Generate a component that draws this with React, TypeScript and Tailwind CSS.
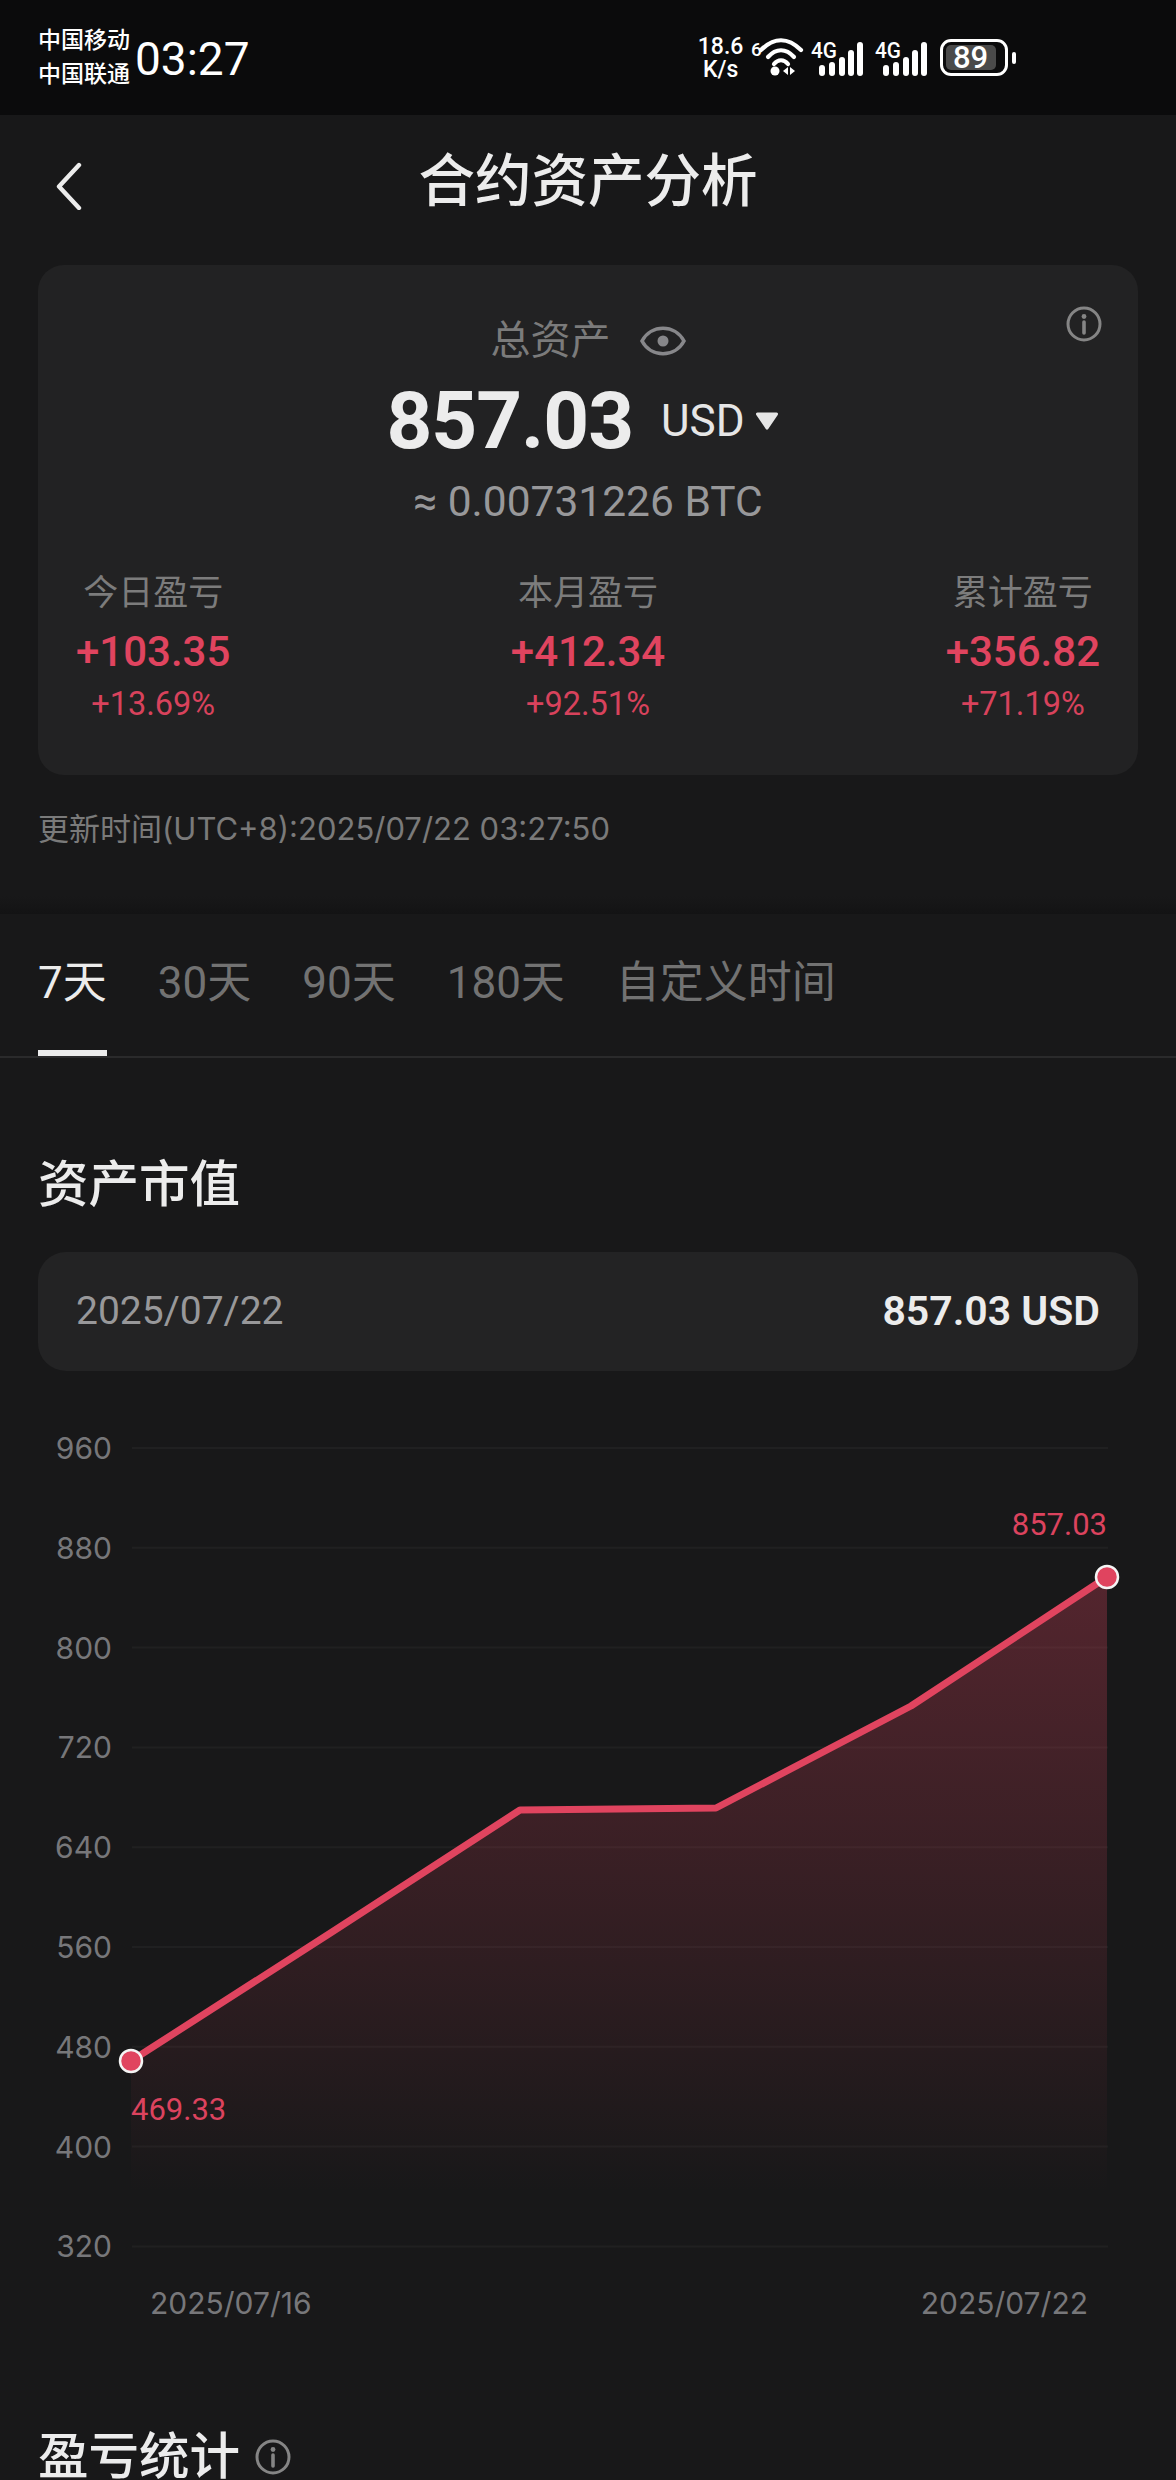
import React from 'react';

const sans = '[font-family:Roboto,"Noto_Sans_CJK_SC",sans-serif]';

const Signal: React.FC = () => (
  <svg width="54" height="40" viewBox="0 0 54 40" fill="white">
    <text x="0" y="20" fontSize="22" fontWeight="500" textLength="26" lengthAdjust="spacingAndGlyphs" fontFamily="Roboto, sans-serif">
      4G
    </text>
    <rect x="8" y="27" width="6" height="11" rx="3" />
    <rect x="18" y="24" width="6" height="14" rx="3" />
    <rect x="28" y="19" width="6" height="19" rx="3" />
    <rect x="37" y="12" width="6" height="26" rx="3" />
    <rect x="46" y="4" width="6" height="34" rx="3" />
  </svg>
);

const InfoIcon: React.FC<{ size: number; color: string }> = ({ size, color }) => (
  <svg width={size} height={size} viewBox="0 0 36 36" fill="none">
    <circle cx="18" cy="18" r="16" stroke={color} strokeWidth="3" />
    <circle cx="18" cy="10.5" r="2.4" fill={color} />
    <path d="M18 16v11" stroke={color} strokeWidth="3.6" strokeLinecap="round" />
  </svg>
);

const StatusBar: React.FC = () => (
  <div className="flex h-[115px] items-center bg-[#0b0b0c] pl-[38px] text-white">
    <div className="flex w-[94px] flex-col text-[23px] leading-[34px] font-medium">
      <span>中国移动</span>
      <span>中国联通</span>
    </div>
    <span className="mt-[3px] ml-[3px] text-[46px] leading-none">03:27</span>
    <div className="ml-[449px] flex items-center">
      <div className="flex w-[44px] flex-col items-center text-[23px] leading-[23px] font-medium">
        <span>18.6</span>
        <span>K/s</span>
      </div>
      <svg width="58" height="44" viewBox="0 0 58 44" fill="none" className="ml-[6px]">
        <text x="2" y="20" fontSize="19" fontWeight="500" fill="white" fontFamily="Roboto, sans-serif">
          6
        </text>
        <path d="M12 14C25 1 39 1 52 14" stroke="white" strokeWidth="4.2" strokeLinecap="round" />
        <path d="M19 21C27 12 37 12 45 21" stroke="white" strokeWidth="4.2" strokeLinecap="round" />
        <path d="M25 28C29 23 35 23 39 28" stroke="white" strokeWidth="4.2" strokeLinecap="round" />
        <circle cx="26" cy="35" r="4.500" fill="white" />
        <path d="M34 35l5-4v8zM41 31l5 4-5 4z" fill="white" />
      </svg>
      <div className="ml-[4px] flex gap-[10px]">
        <Signal />
        <Signal />
      </div>
      <div className="ml-[11px] flex items-center">
        <div className="flex h-[37px] w-[68px] items-center rounded-[11px] border-[3px] border-white p-[3px]">
          <div className="flex h-full w-[50px] items-center justify-center rounded-[5px] bg-[#4a4a4a] text-[31px] leading-none font-medium">
            89
          </div>
        </div>
        <div className="ml-[4px] h-[12px] w-[4px] rounded-full bg-white" />
      </div>
    </div>
  </div>
);

const Stat: React.FC<{ label: string; value: string; pct: string }> = ({ label, value, pct }) => (
  <div className="flex flex-col items-center">
    <span className="text-[35px] leading-[44px] text-[#7c7c7c]">{label}</span>
    <span className="mt-[13px] text-[42px] leading-[46px] font-medium text-[#e0445f]">{value}</span>
    <span className="mt-[11px] text-[32.5px] leading-[36px] text-[#d8425c]">{pct}</span>
  </div>
);

const Card: React.FC = () => (
  <div className="relative mx-[38px] h-[510px] rounded-[26px] bg-[#222223] pt-[53px]">
    <div className="absolute top-[41px] right-[36px]">
      <InfoIcon size={36} color="#858585" />
    </div>
    <div className="flex h-[46px] items-center justify-center">
      <span className="text-[40px] leading-none text-[#7b7b7b]">总资产</span>
      <svg width="46" height="32" viewBox="0 0 46 32" fill="none" className="ml-[29px]">
        <path d="M2 16C11 -1 35 -1 44 16C35 33 11 33 2 16Z" stroke="#87878a" strokeWidth="3.6" />
        <circle cx="23" cy="16" r="5.5" fill="#87878a" />
      </svg>
    </div>
    <div className="mt-[23px] flex h-[68px] items-center justify-center pr-[11px]">
      <span className="text-[80px] leading-none font-bold tracking-[-1px] text-[#ececec]">857.03</span>
      <span className="ml-[28px] text-[44px] leading-none text-[#e6e6e6]">USD</span>
      <svg width="24" height="20" viewBox="0 0 24 20" className="ml-[10px]">
        <path d="M2.5 1.5h19a1.5 1.5 0 0 1 1.2 2.4L13.2 18a1.5 1.5 0 0 1-2.4 0L1.3 3.900a1.5 1.5 0 0 1 1.200-2.400Z" fill="#e6e6e6" />
      </svg>
    </div>
    <div className="mt-[23px] text-center text-[42.5px] leading-[48px] text-[#98989a]">≈ 0.00731226 BTC</div>
    <div className="mt-[46px] flex justify-between px-[38px]">
      <Stat label="今日盈亏" value="+103.35" pct="+13.69%" />
      <Stat label="本月盈亏" value="+412.34" pct="+92.51%" />
      <Stat label="累计盈亏" value="+356.82" pct="+71.19%" />
    </div>
  </div>
);

const tabs = ['30天', '90天', '180天', '自定义时间'];

const Tabs: React.FC = () => (
  <div className="relative flex h-[144px] items-start gap-[51px] border-b-2 border-[#2a2a2b] px-[38px] pt-[39px] text-[44px] leading-[60px]">
    <div className="relative h-[103px] text-[#ececec]">
      7天
      <div className="absolute right-0 bottom-0 left-0 h-[6px] bg-[#ececec]" />
    </div>
    {tabs.map((t) => (
      <span key={t} className="text-[#727272]">
        {t}
      </span>
    ))}
  </div>
);

// chart coordinates are page px minus the top of the svg
const ticks = [960, 880, 800, 720, 640, 560, 480, 400, 320];
const pts = '131,630 332,501 520,379 716,377 911,275 1107,146';

const Chart: React.FC = () => (
  <svg width="1176" height="900" viewBox="0 0 1176 900" className="mt-[60px] block">
    <defs>
      <linearGradient id="fill" x1="0" y1="0" x2="0" y2="1">
        <stop offset="0" stopColor="#e0445f" stopOpacity="0.3" />
        <stop offset="0.5" stopColor="#e0445f" stopOpacity="0.14" />
        <stop offset="0.92" stopColor="#e0445f" stopOpacity="0" />
      </linearGradient>
    </defs>
    {ticks.map((t, i) => (
      <g key={t}>
        <line x1="132" x2="1108" y1={17 + i * 99.8} y2={17 + i * 99.8} stroke="#202021" strokeWidth="2" />
        <text x="112" y={28 + i * 99.8} textAnchor="end" fontSize="30" fill="#77777a" fontFamily="Inter, sans-serif">
          {t}
        </text>
      </g>
    ))}
    <polygon points={`131,816 ${pts} 1107,816`} fill="url(#fill)" />
    <polyline points={pts} fill="none" stroke="#e0445f" strokeWidth="7" strokeLinejoin="round" />
    <circle cx="131" cy="630" r="11" fill="#e0445f" stroke="#f4f4f4" strokeWidth="2.5" />
    <circle cx="1107" cy="146" r="11" fill="#e0445f" stroke="#f4f4f4" strokeWidth="2.5" />
    <text x="1107" y="104" textAnchor="end" fontSize="31" fill="#dc435e" fontFamily="Roboto, sans-serif">
      857.03
    </text>
    <text x="131" y="689" fontSize="31" fill="#dc435e" fontFamily="Roboto, sans-serif">
      469.33
    </text>
    <text x="150" y="883" fontSize="30" fill="#77777a" fontFamily="Inter, sans-serif">
      2025/07/16
    </text>
    <text x="1088" y="883" textAnchor="end" fontSize="30" fill="#77777a" fontFamily="Inter, sans-serif">
      2025/07/22
    </text>
  </svg>
);

const App: React.FC = () => {
  return (
    <div className={`h-[2480px] w-[1176px] overflow-hidden bg-[#181819] ${sans}`}>
      <StatusBar />
      <div className="relative flex h-[150px] items-center justify-center pb-[16px]">
        <svg width="30" height="48" viewBox="0 0 30 48" fill="none" className="absolute top-[47px] left-[54px]">
          <path d="M25 3L5 24.500L25 46" stroke="#ececec" strokeWidth="4.400" strokeLinecap="round" strokeLinejoin="round" />
        </svg>
        <h1 className="text-[56.5px] leading-none font-medium text-[#ececec]">合约资产分析</h1>
      </div>
      <Card />
      <div className='mx-[38px] mt-[34px] [font-family:Inter,"Noto_Sans_CJK_SC",sans-serif] text-[31px] leading-[40px] text-[#7a7a7a]'>
        更新时间(UTC+8):2025/07/22 03:27:50
      </div>
      <div className="mt-[47px] h-[18px] bg-gradient-to-b from-[#181819] to-[#131314]" />
      <Tabs />
      <h2 className="mx-[38px] mt-[92px] text-[50.5px] leading-[70px] font-medium text-[#ececec]">资产市值</h2>
      <div className="mx-[38px] mt-[32px] flex h-[119px] items-center justify-between rounded-[28px] bg-[#232324] px-[38px]">
        <span className="text-[39px] leading-none text-[#98989a]">2025/07/22</span>
        <span className="text-[41px] leading-none font-semibold text-[#ececec]">857.03 USD</span>
      </div>
      <Chart />
      <div className="mx-[38px] mt-[91px] flex items-center">
        <h2 className="text-[50.5px] leading-[70px] font-medium text-[#ececec]">盈亏统计</h2>
        <div className="ml-[15px]">
          <InfoIcon size={36} color="#858585" />
        </div>
      </div>
    </div>
  );
};

export default App;
